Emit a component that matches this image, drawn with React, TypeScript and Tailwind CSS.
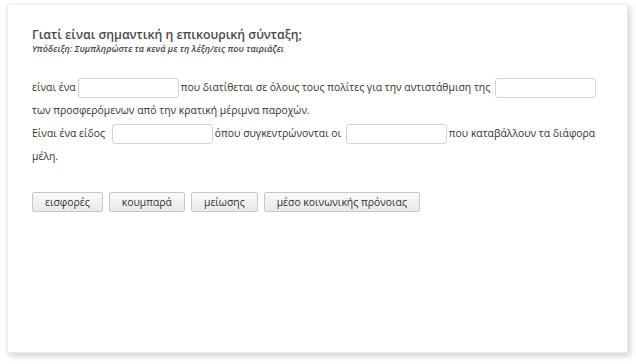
export default function App() {
  const words = ['εισφορές', 'κουμπαρά', 'μείωσης', 'μέσο κοινωνικής πρόνοιας']

  return (
    <div className="w-[636px] h-[364px] bg-white pt-[4px] pl-[7px] font-['Open_Sans',sans-serif] text-[#333]">
      <div className="w-[621px] h-[349px] bg-white border border-[#ececec] shadow-[2px_3px_6px_rgba(0,0,0,0.18)] px-[24px] pt-[22px]">
        <h2 className="text-[12.3px] leading-[16px] font-semibold text-[#4a4a4a]">
          Γιατί είναι σημαντική η επικουρική σύνταξη;
        </h2>
        <p className="text-[9px] leading-[12px] italic font-semibold text-[#444]">
          Υπόδειξη: Συμπληρώστε τα κενά με τη λέξη/εις που ταιριάζει
        </p>

        <div className="mt-[21px] w-[570px] text-[10.4px] leading-[23px]">
          είναι ένα
          <input className="inline-block align-middle mx-[2px] w-[101px] h-[20px] border border-[#d4d4d4] rounded-[3px]" />
          που διατίθεται σε όλους τους πολίτες για την αντιστάθμιση της{' '}
          <input className="inline-block align-middle mx-[2px] w-[101px] h-[20px] border border-[#d4d4d4] rounded-[3px]" />{' '}
          των προσφερόμενων από την κρατική μέριμνα παροχών.
          <br />
          Είναι ένα είδος{' '}
          <input className="inline-block align-middle ml-[4px] mr-[2px] w-[101px] h-[20px] border border-[#d4d4d4] rounded-[3px]" />
          όπου συγκεντρώνονται οι{' '}
          <input className="inline-block align-middle mx-[2px] w-[101px] h-[20px] border border-[#d4d4d4] rounded-[3px]" />
          που καταβάλλουν τα διάφορα μέλη.
        </div>

        <div className="mt-[24px] flex gap-[6px]">
          {words.map((w) => (
            <button
              key={w}
              className="h-[20px] px-[12px] text-[10.4px] leading-[18px] text-[#333] border border-[#c8c8c8] rounded-[2px] bg-gradient-to-b from-[#fafafa] to-[#e9e9e9]"
            >
              {w}
            </button>
          ))}
        </div>
      </div>
    </div>
  )
}
